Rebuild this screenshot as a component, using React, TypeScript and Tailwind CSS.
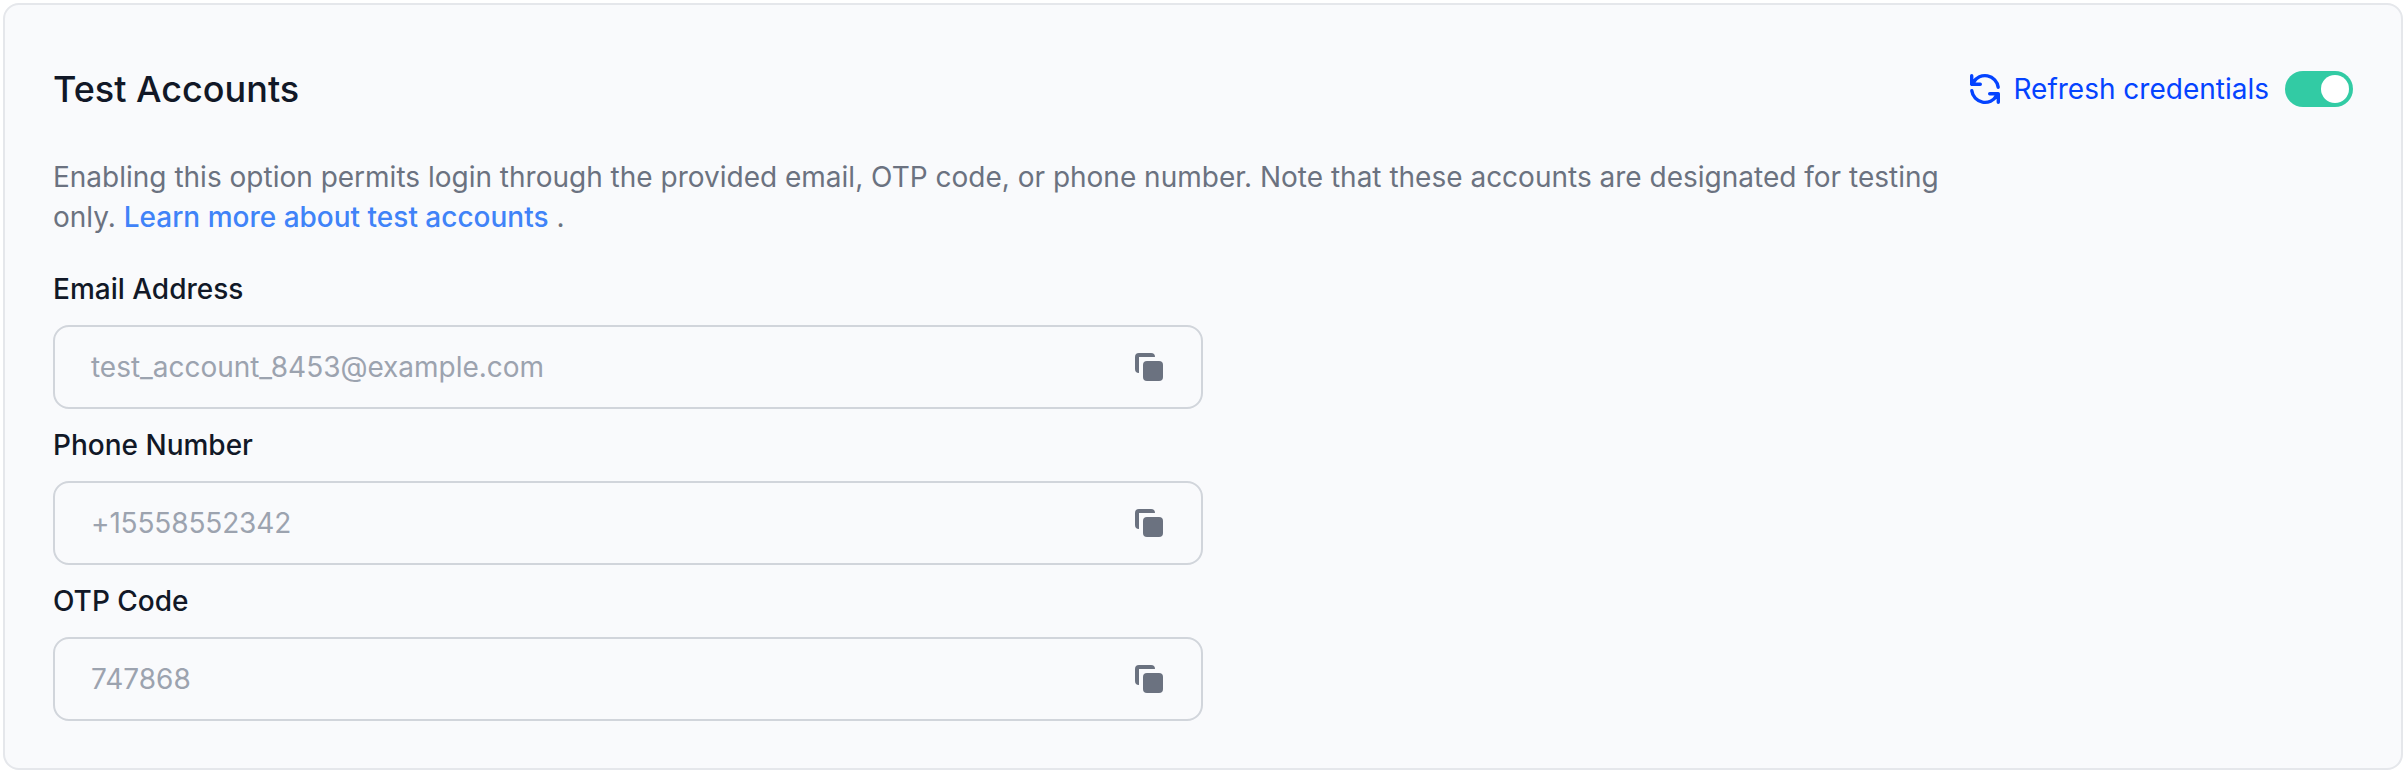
import React from "react";

function RefreshIcon() {
  return (
    <svg width="32" height="32" viewBox="0 0 32 32" fill="none" stroke="currentColor" strokeWidth="3.4" strokeLinecap="round" strokeLinejoin="round" aria-hidden="true">
      <path d="M29.2 14.2A13.3 13.3 0 0 0 4.4 9.4L2.7 11.3M2.7 2.7V11.3H11.3" />
      <path d="M2.8 17.8A13.3 13.3 0 0 0 27.6 22.6L29.3 20.7M29.3 29.3V20.7H20.7" />
    </svg>
  );
}

function CopyIcon() {
  return (
    <svg width="28" height="28" viewBox="0 0 28 28" fill="currentColor" aria-hidden="true">
      <path d="M4 20A4 4 0 0 1 0 16V4A4 4 0 0 1 4 0H16A4 4 0 0 1 20 4H4Z" />
      <rect x="8" y="8" width="20" height="20" rx="4" />
    </svg>
  );
}

const fields = [
  { label: "Email Address", value: "test_account_8453@example.com", tracking: "tracking-[-0.03px]" },
  { label: "Phone Number", value: "+15558552342", tracking: "tracking-[-0.15px]" },
  { label: "OTP Code", value: "747868", tracking: "tracking-normal" },
];

export default function App() {
  return (
    <main className="h-[774px] w-[2406px] bg-white pt-[3px] pl-[3px] font-['Inter',sans-serif] text-[28px] leading-10">
      <section className="h-[767px] w-[2400px] rounded-[16px] border-2 border-[#e5e7eb] bg-[#f9fafc] px-12 pt-16">
        <header className="flex h-10 items-center justify-between">
          <h2 className="text-[36px] font-medium text-[#111827]">Test Accounts</h2>
          <div className="flex items-center">
            <button className="flex items-center gap-3 text-[#0443ff]">
              <RefreshIcon />
              <span>Refresh credentials</span>
            </button>
            <button role="switch" aria-checked="true" aria-label="Test accounts" className="ml-4 flex h-9 w-[68px] items-center justify-end rounded-full bg-[#32cba4] p-1">
              <span className="size-7 rounded-full bg-white" />
            </button>
          </div>
        </header>
        <p className="mt-12 w-[1900px] text-[#6b7280]">
          Enabling this option permits login through the provided email, OTP code, or phone number. Note that these accounts are designated for testing only.{" "}
          <a className="font-medium text-[#4083f8]">Learn more about test accounts</a> .
        </p>
        <div className="mt-8 flex w-[1150px] flex-col gap-4">
          {fields.map((f) => (
            <div key={f.label} className="flex flex-col gap-4">
              <div className="font-medium text-[#111827]">{f.label}</div>
              <div className="flex h-[84px] items-center justify-between rounded-[16px] border-2 border-[#d1d5db] pr-[38px] pl-9 text-[#9ca3af]">
                <span className={f.tracking}>{f.value}</span>
                <button className="text-[#6b7280]" aria-label="Copy">
                  <CopyIcon />
                </button>
              </div>
            </div>
          ))}
        </div>
      </section>
    </main>
  );
}
